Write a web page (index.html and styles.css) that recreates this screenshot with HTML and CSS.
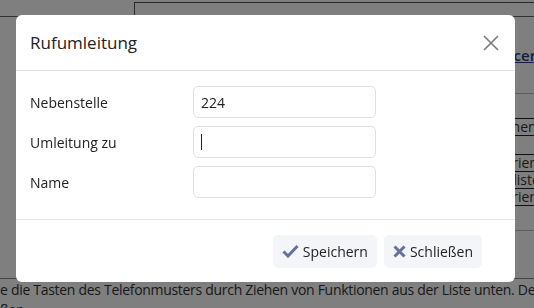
FILE: index.html
```html
<!DOCTYPE html>
<html lang="de">
<head>
    <meta charset="UTF-8">
    <meta name="viewport" content="width=device-width, initial-scale=1.0">
    <title>Rufumleitung</title>
    <link rel="stylesheet" href="styles.css">
</head>
<body>
    <!-- Seite im Hintergrund -->
    <div class="page">
        <div class="topbar">
            <div class="topbox"></div>
        </div>
        <div class="side">
            <a class="side-link" href="#">Servicergebnisse</a>
            <div class="side-divider"></div>
            <div class="side-row single">Hauptmenu</div>
            <div class="side-table">
                <div class="side-row">Kategorien</div>
                <div class="side-row">Senderliste</div>
                <div class="side-row">Kategorien</div>
            </div>
            <div class="side-divider last"></div>
        </div>
        <p class="hint">e die Tasten des Telefonmusters durch Ziehen von Funktionen aus der Liste unten. Der Schlüssel wird übernommen.<br>ßen</p>
    </div>

    <!-- Dialog -->
    <div class="overlay">
        <div class="modal">
            <div class="modal-header">
                <h2 class="modal-title">Rufumleitung</h2>
                <button class="close-btn" aria-label="Schließen">
                    <svg width="16" height="16" viewBox="0 0 16 16">
                        <path d="M1 1 L15 15 M15 1 L1 15" stroke="#7a7a7a" stroke-width="1.6" fill="none"/>
                    </svg>
                </button>
            </div>
            <div class="modal-body">
                <label class="field-label">Nebenstelle</label>
                <input class="field-input" type="text" value="224">
                <label class="field-label">Umleitung zu</label>
                <div class="input-wrap">
                    <input class="field-input" type="text">
                    <span class="caret"></span>
                </div>
                <label class="field-label">Name</label>
                <input class="field-input" type="text">
            </div>
            <div class="modal-footer">
                <button class="btn">
                    <svg width="17" height="14" viewBox="0 0 17 14">
                        <path d="M1.5 7.5 L6 12 L15.5 2" stroke="#66709c" stroke-width="3" fill="none"/>
                    </svg>
                    Speichern
                </button>
                <button class="btn">
                    <svg width="13" height="13" viewBox="0 0 13 13">
                        <path d="M1.5 1.5 L11.5 11.5 M11.5 1.5 L1.5 11.5" stroke="#66709c" stroke-width="3" fill="none"/>
                    </svg>
                    Schließen
                </button>
            </div>
        </div>
    </div>
</body>
</html>
```

FILE: styles.css
```css
/* Grundlayout */
body {
    margin: 0;
    font-family: "Open Sans", "Noto Sans", sans-serif;
    color: #333;
    background: #fff;
    overflow: hidden;
}

/* Hintergrundseite */
.page {
    height: 308px;
    overflow: hidden;
}

.topbar {
    height: 14px;
    border-bottom: 1px solid #666;
}

.topbox {
    margin-left: 134px;
    margin-top: 2px;
    height: 12px;
    border: 1px solid #555;
    border-right: none;
    border-bottom: none;
}

.side {
    margin-left: 467px;
    padding-top: 29px;
    width: 200px;
}

.side-link {
    display: block;
    margin-left: 11px;
    color: #2b3a8c;
    font-size: 15px;
    line-height: 18px;
    white-space: nowrap;
    font-weight: 600;
}

.side-divider {
    margin-top: 29px;
    border-bottom: 1px solid #bbb;
}

.side-divider.last {
    margin-top: 24px;
}

.side-row {
    font-size: 14px;
    height: 16px;
    line-height: 16px;
    border-bottom: 1px solid #222;
    white-space: nowrap;
}

.side-row.single {
    margin-top: 24px;
    border-top: 1px solid #222;
}

.side-table {
    margin-top: 18px;
    border-top: 1px solid #222;
}

.hint {
    margin: 47px 0 0;
    padding-top: 1px;
    font-size: 14px;
    letter-spacing: -0.3px;
    line-height: 20px;
    white-space: nowrap;
    color: #333;
    border-top: 1px solid #888;
}

/* Abdunklung */
.overlay {
    position: fixed;
    inset: 0;
    background: rgba(0, 0, 0, 0.5);
}

/* Dialog */
.modal {
    margin: 15px 0 0 16px;
    width: 499px;
    height: 267px;
    background: #fff;
    border-radius: 6px;
    display: flex;
    flex-direction: column;
}

.modal-header {
    height: 55px;
    display: flex;
    align-items: center;
    justify-content: space-between;
    padding: 0 16px 0 14px;
    border-bottom: 1px solid #e2e3e8;
}

.modal-title {
    margin: 0;
    font-size: 17px;
    font-weight: 400;
    color: #222;
}

.close-btn {
    border: none;
    background: none;
    padding: 0;
    display: flex;
    cursor: pointer;
}

.modal-body {
    display: grid;
    grid-template-columns: 163px 183px;
    grid-auto-rows: 32px;
    row-gap: 8px;
    align-items: center;
    padding: 15px 14px 21px;
    border-bottom: 1px solid #e2e3e8;
}

.field-label {
    font-size: 14px;
    color: #222;
}

.field-input {
    box-sizing: border-box;
    width: 183px;
    height: 32px;
    border: 1px solid #dfe0e4;
    border-radius: 5px;
    padding: 0 7px;
    font-family: inherit;
    font-size: 14px;
    color: #222;
    outline: none;
}

.input-wrap {
    position: relative;
    height: 32px;
}

.caret {
    position: absolute;
    left: 8px;
    top: 8px;
    width: 1px;
    height: 16px;
    background: #222;
}

.modal-footer {
    flex: 1;
    display: flex;
    justify-content: flex-end;
    align-items: center;
    gap: 7px;
    padding: 0 33px 0 0;
}

.btn {
    display: flex;
    align-items: center;
    gap: 4px;
    height: 33px;
    padding: 0 9px;
    border: none;
    border-radius: 5px;
    background: #f4f5f9;
    font-family: inherit;
    font-size: 14px;
    color: #222;
    cursor: pointer;
}
```
